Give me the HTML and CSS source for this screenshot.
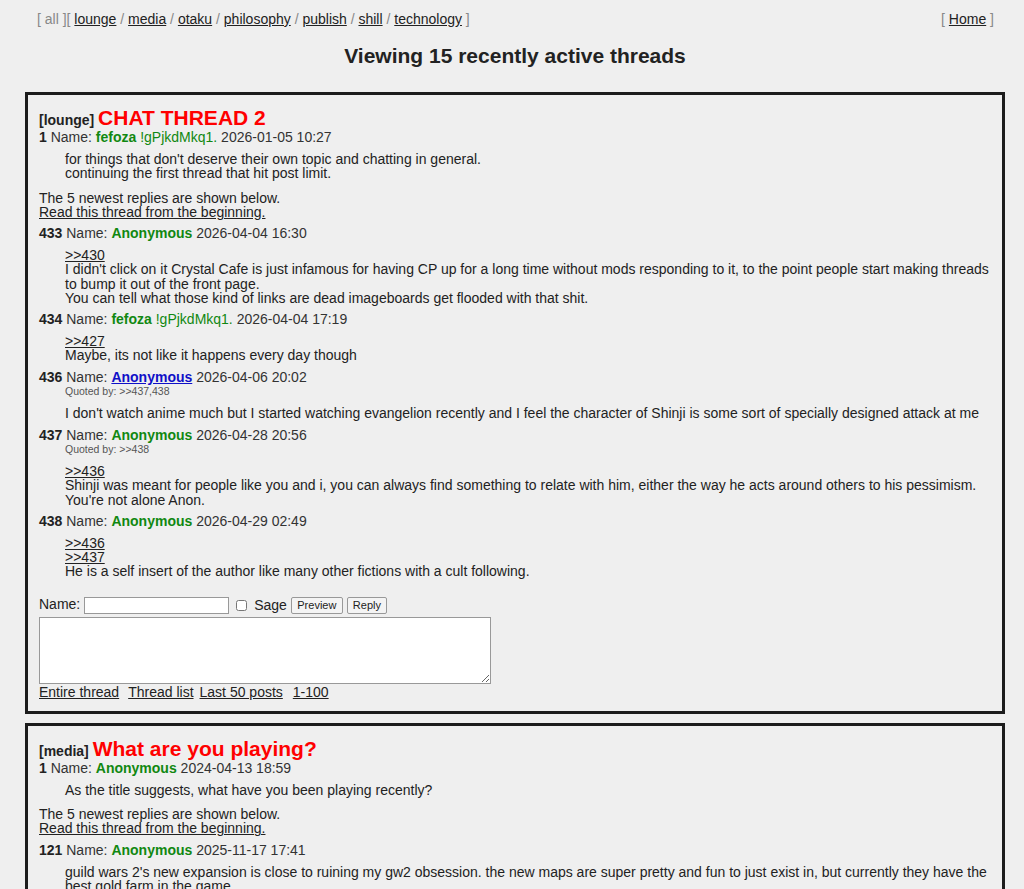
FILE: index.html
```html
<!DOCTYPE html>
<html>
<head>
<meta charset="utf-8">
<title>Recently active threads</title>
<link rel="stylesheet" href="styles.css">
</head>
<body>
<div class="nav">
  <div class="nav-left">[ all ][ <a href="#">lounge</a> / <a href="#">media</a> / <a href="#">otaku</a> / <a href="#">philosophy</a> / <a href="#">publish</a> / <a href="#">shill</a> / <a href="#">technology</a> ]</div>
  <div class="nav-right">[ <a href="#">Home</a> ]</div>
</div>
<h1 class="page-title">Viewing 15 recently active threads</h1>

<div class="thread">
  <h2 class="thread-title"><span class="cat">[lounge]</span> <span class="subject">CHAT THREAD 2</span></h2>
  <div class="post-head"><b class="num">1</b> Name: <b class="name">fefoza</b> <span class="trip">!gPjkdMkq1.</span> 2026-01-05 10:27</div>
  <div class="post-body">for things that don't deserve their own topic and chatting in general.<br>continuing the first thread that hit post limit.</div>
  <div class="omitted">The 5 newest replies are shown below.<br><a href="#">Read this thread from the beginning.</a></div>

  <div class="post-head"><b class="num">433</b> Name: <b class="name">Anonymous</b> 2026-04-04 16:30</div>
  <div class="post-body"><a href="#">&gt;&gt;430</a><br>I didn't click on it Crystal Cafe is just infamous for having CP up for a long time without mods responding to it, to the point people start making threads to bump it out of the front page.<br>You can tell what those kind of links are dead imageboards get flooded with that shit.</div>

  <div class="post-head"><b class="num">434</b> Name: <b class="name">fefoza</b> <span class="trip">!gPjkdMkq1.</span> 2026-04-04 17:19</div>
  <div class="post-body"><a href="#">&gt;&gt;427</a><br>Maybe, its not like it happens every day though</div>

  <div class="post-head"><b class="num">436</b> Name: <a href="#" class="name email">Anonymous</a> 2026-04-06 20:02</div>
  <div class="quoted">Quoted by: &gt;&gt;437,438</div>
  <div class="post-body">I don't watch anime much but I started watching evangelion recently and I feel the character of Shinji is some sort of specially designed attack at me</div>

  <div class="post-head"><b class="num">437</b> Name: <b class="name">Anonymous</b> 2026-04-28 20:56</div>
  <div class="quoted">Quoted by: &gt;&gt;438</div>
  <div class="post-body"><a href="#">&gt;&gt;436</a><br>Shinji was meant for people like you and i, you can always find something to relate with him, either the way he acts around others to his pessimism.<br>You're not alone Anon.</div>

  <div class="post-head"><b class="num">438</b> Name: <b class="name">Anonymous</b> 2026-04-29 02:49</div>
  <div class="post-body"><a href="#">&gt;&gt;436</a><br><a href="#">&gt;&gt;437</a><br>He is a self insert of the author like many other fictions with a cult following.</div>

  <form class="reply-form">
    <div class="form-row">
      <label class="name-label">Name: <input type="text" class="name-input"></label>
      <label class="sage"><input type="checkbox"> Sage</label>
      <button type="button" class="btn-preview">Preview</button>
      <button type="button">Reply</button>
    </div>
    <textarea class="comment"></textarea>
  </form>
  <div class="thread-links"><a href="#" class="l-first">Entire thread</a><a href="#" class="l-narrow">Thread list</a><a href="#" class="l-wide">Last 50 posts</a><a href="#">1-100</a></div>
</div>

<div class="thread">
  <h2 class="thread-title"><span class="cat">[media]</span> <span class="subject">What are you playing?</span></h2>
  <div class="post-head"><b class="num">1</b> Name: <b class="name">Anonymous</b> 2024-04-13 18:59</div>
  <div class="post-body">As the title suggests, what have you been playing recently?</div>
  <div class="omitted">The 5 newest replies are shown below.<br><a href="#">Read this thread from the beginning.</a></div>

  <div class="post-head"><b class="num">121</b> Name: <b class="name">Anonymous</b> 2025-11-17 17:41</div>
  <div class="post-body">guild wars 2's new expansion is close to ruining my gw2 obsession. the new maps are super pretty and fun to just exist in, but currently they have the best gold farm in the game.<br>I keep logging in every day just to do it.</div>
</div>
</body>
</html>
```

FILE: styles.css
```css
html {
  background: #efefef;
}
body {
  margin: 0;
  padding: 11px 19px 0 25px;
  font-family: Arial, "Liberation Sans", sans-serif;
  font-size: 14px;
  line-height: 14.2px;
  color: #222;
  background: #efefef;
}
a {
  color: #222;
}
.nav {
  display: flex;
  justify-content: space-between;
  padding: 0 11px 0 12px;
  font-size: 14px;
  line-height: 16px;
  color: #888;
}
.nav a {
  color: #222;
}
.page-title {
  margin: 16px 0 0;
  text-align: center;
  font-size: 21px;
  line-height: 26px;
  font-weight: bold;
  color: #222;
}
.thread {
  margin: 23px 0 9px;
  border: 3px solid #1c1c1c;
  padding: 13px 11px 12px;
}
.thread + .thread {
  margin-top: 0;
}
.thread-title {
  margin: 0;
  font-size: 14px;
  line-height: 19px;
  font-weight: bold;
}
.subject {
  color: #ff0000;
  font-size: 21px;
}
.post-head {
  margin-top: 7px;
  color: #333;
}
.thread-title + .post-head {
  margin-top: 0;
}
.num {
  font-weight: bold;
  color: #222;
}
.name {
  color: #118811;
  font-weight: bold;
}
.trip {
  color: #118811;
}
.name.email {
  color: #1010c8;
}
.quoted {
  font-size: 10.5px;
  line-height: 14.5px;
  color: #555;
  margin-left: 26px;
}
.post-body {
  margin: 8px 0 0 26px;
}
.omitted {
  margin-top: 10px;
}
.reply-form {
  margin-top: 18px;
}
.form-row {
  display: flex;
  align-items: center;
  height: 17px;
}
.name-input {
  box-sizing: border-box;
  width: 145px;
  height: 17px;
  margin: 0;
  padding: 1px;
  border: 1px solid #999;
  background: #fff;
  font-size: 12px;
  vertical-align: middle;
}
.sage {
  display: inline-flex;
  align-items: center;
  margin-left: 7px;
}
.sage input {
  margin: 0 7px 0 0;
  width: 11px;
  height: 11px;
}
button {
  box-sizing: border-box;
  height: 17px;
  font-family: Arial, "Liberation Sans", sans-serif;
  font-size: 11px;
  line-height: 13px;
  padding: 1px 5px;
  border: 1px solid #999;
  border-radius: 2px;
  background: #f4f4f4;
  color: #222;
}
.btn-preview {
  margin: 0 4px 0 4px;
  width: 52px;
}
.comment {
  display: block;
  box-sizing: border-box;
  margin-top: 3px;
  width: 452px;
  height: 67px;
  border: 1px solid #999;
  background: #fff;
  resize: both;
}
.thread-links {
  margin-top: 1px;
}
.l-first {
  margin-right: 9px;
}
.l-wide {
  margin-right: 10px;
}
.l-narrow {
  margin-right: 6px;
}
```
